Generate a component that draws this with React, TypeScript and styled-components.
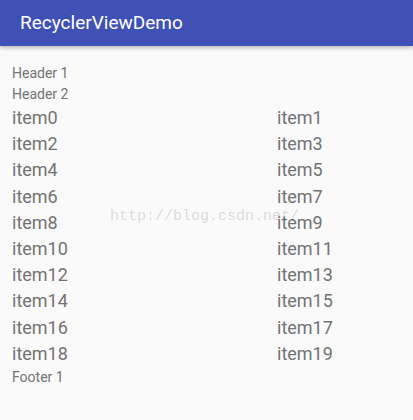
import styled, { createGlobalStyle } from "styled-components";

const GlobalStyle = createGlobalStyle`
  html, body {
    margin: 0;
    padding: 0;
    background: #fafafa;
  }
  body {
    font-family: Roboto, "Noto Sans", sans-serif;
  }
`;

const Screen = styled.div`
  position: relative;
  width: 413px;
  height: 420px;
  overflow: hidden;
  background: #fafafa;
`;

const AppBar = styled.header`
  display: flex;
  align-items: center;
  height: 46px;
  padding: 0 20px;
  box-sizing: border-box;
  background: #3f51b5;
  box-shadow: 0 2px 4px rgba(0, 0, 0, 0.25);
  position: relative;
  z-index: 1;
`;

const Title = styled.h1`
  margin: 0;
  padding-bottom: 2px;
  font-size: 19px;
  font-weight: 400;
  color: #ffffff;
`;

const List = styled.div`
  display: grid;
  grid-template-columns: 265px 1fr;
  padding: 17px 12px 0;
  color: #737373;
`;

const Band = styled.div`
  grid-column: 1 / -1;
  font-size: 14px;
  line-height: 21px;
`;

const Cell = styled.div`
  font-size: 18px;
  line-height: 26.2px;
`;

const Watermark = styled.div`
  position: absolute;
  left: 110px;
  top: 208px;
  font-family: "Liberation Mono", monospace;
  font-size: 15px;
  line-height: 18px;
  color: rgba(0, 0, 0, 0.15);
  pointer-events: none;
  white-space: nowrap;
`;

const items = Array.from({ length: 20 }, (_, i) => `item${i}`);

const App = () => {
  return (
    <Screen>
      <GlobalStyle />
      <AppBar>
        <Title>RecyclerViewDemo</Title>
      </AppBar>
      <List>
        <Band>Header 1</Band>
        <Band>Header 2</Band>
        {items.map((item) => (
          <Cell key={item}>{item}</Cell>
        ))}
        <Band>Footer 1</Band>
      </List>
      <Watermark>http://blog.csdn.net/</Watermark>
    </Screen>
  );
};

export default App;
